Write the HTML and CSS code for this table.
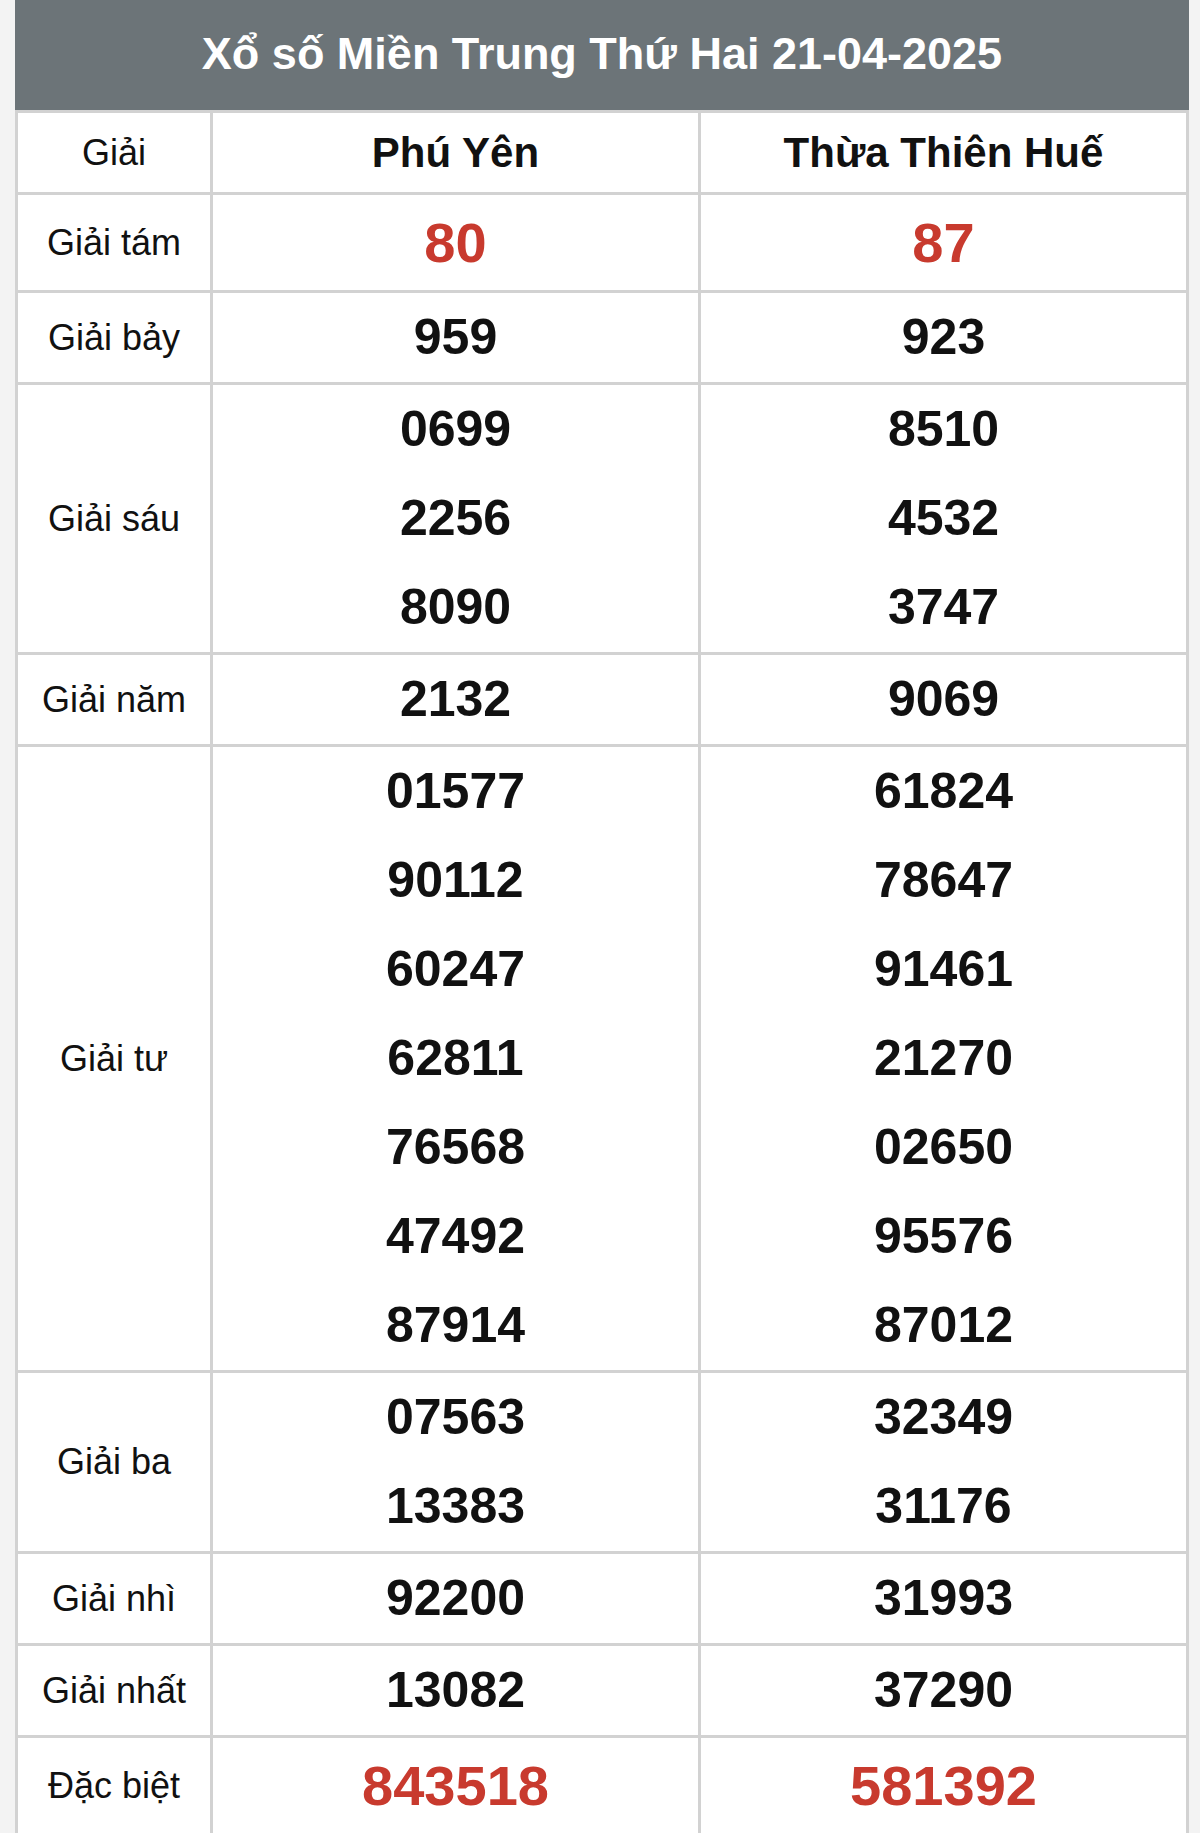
FILE: index.html
```html
<!DOCTYPE html>
<html lang="vi">
<head>
<meta charset="utf-8">
<title>Xổ số Miền Trung Thứ Hai 21-04-2025</title>
<link rel="stylesheet" href="styles.css">
</head>
<body>
<table class="kq">
  <colgroup>
    <col class="c-lbl">
    <col class="c-prov">
    <col class="c-prov">
  </colgroup>
  <thead>
    <tr class="title-row"><th colspan="3" class="title">Xổ số Miền Trung Thứ Hai 21-04-2025</th></tr>
    <tr class="head-row">
      <th class="lbl">Giải</th>
      <th class="prov">Phú Yên</th>
      <th class="prov">Thừa Thiên Huế</th>
    </tr>
  </thead>
  <tbody>
    <tr class="r-big">
      <td class="lbl">Giải tám</td>
      <td class="num red"><div class="ln big">80</div></td>
      <td class="num red"><div class="ln big">87</div></td>
    </tr>
    <tr>
      <td class="lbl">Giải bảy</td>
      <td class="num"><div class="ln">959</div></td>
      <td class="num"><div class="ln">923</div></td>
    </tr>
    <tr>
      <td class="lbl">Giải sáu</td>
      <td class="num"><div class="ln">0699</div><div class="ln">2256</div><div class="ln">8090</div></td>
      <td class="num"><div class="ln">8510</div><div class="ln">4532</div><div class="ln">3747</div></td>
    </tr>
    <tr>
      <td class="lbl">Giải năm</td>
      <td class="num"><div class="ln">2132</div></td>
      <td class="num"><div class="ln">9069</div></td>
    </tr>
    <tr>
      <td class="lbl">Giải tư</td>
      <td class="num"><div class="ln">01577</div><div class="ln">90112</div><div class="ln">60247</div><div class="ln">62811</div><div class="ln">76568</div><div class="ln">47492</div><div class="ln">87914</div></td>
      <td class="num"><div class="ln">61824</div><div class="ln">78647</div><div class="ln">91461</div><div class="ln">21270</div><div class="ln">02650</div><div class="ln">95576</div><div class="ln">87012</div></td>
    </tr>
    <tr>
      <td class="lbl">Giải ba</td>
      <td class="num"><div class="ln">07563</div><div class="ln">13383</div></td>
      <td class="num"><div class="ln">32349</div><div class="ln">31176</div></td>
    </tr>
    <tr>
      <td class="lbl">Giải nhì</td>
      <td class="num"><div class="ln">92200</div></td>
      <td class="num"><div class="ln">31993</div></td>
    </tr>
    <tr>
      <td class="lbl">Giải nhất</td>
      <td class="num"><div class="ln">13082</div></td>
      <td class="num"><div class="ln">37290</div></td>
    </tr>
    <tr class="r-big">
      <td class="lbl">Đặc biệt</td>
      <td class="num red"><div class="ln big">843518</div></td>
      <td class="num red"><div class="ln big">581392</div></td>
    </tr>
  </tbody>
</table>
</body>
</html>
```

FILE: styles.css
```css
html, body {
  margin: 0;
  padding: 0;
  background: #f3f3f3;
}
body {
  font-family: "Liberation Sans", Arial, sans-serif;
  color: #111;
}
.kq {
  margin-left: 15px;
  width: 1171px;
  border-collapse: collapse;
  background: #fff;
  table-layout: fixed;
}
.c-lbl {
  width: 195px;
}
.c-prov {
  width: 488px;
}
.kq th, .kq td {
  border: 3px solid #d2d2d2;
  padding: 0;
  text-align: center;
  vertical-align: middle;
}
.title-row .title {
  background: #6c7478;
  color: #fff;
  font-size: 45px;
  font-weight: bold;
  height: 101px;
  padding-bottom: 6px;
  border-color: #6c7478;
  border-bottom-color: #d2d2d2;
}
.head-row th {
  height: 79px;
}
.lbl {
  font-size: 36px;
  font-weight: normal;
}
.prov {
  font-size: 42px;
  font-weight: bold;
}
.num {
  font-weight: bold;
  font-size: 50px;
}
.ln {
  line-height: 89px;
}
.ln.big {
  line-height: 95px;
  font-size: 56px;
}
.red {
  color: #c83a2e;
}
```
